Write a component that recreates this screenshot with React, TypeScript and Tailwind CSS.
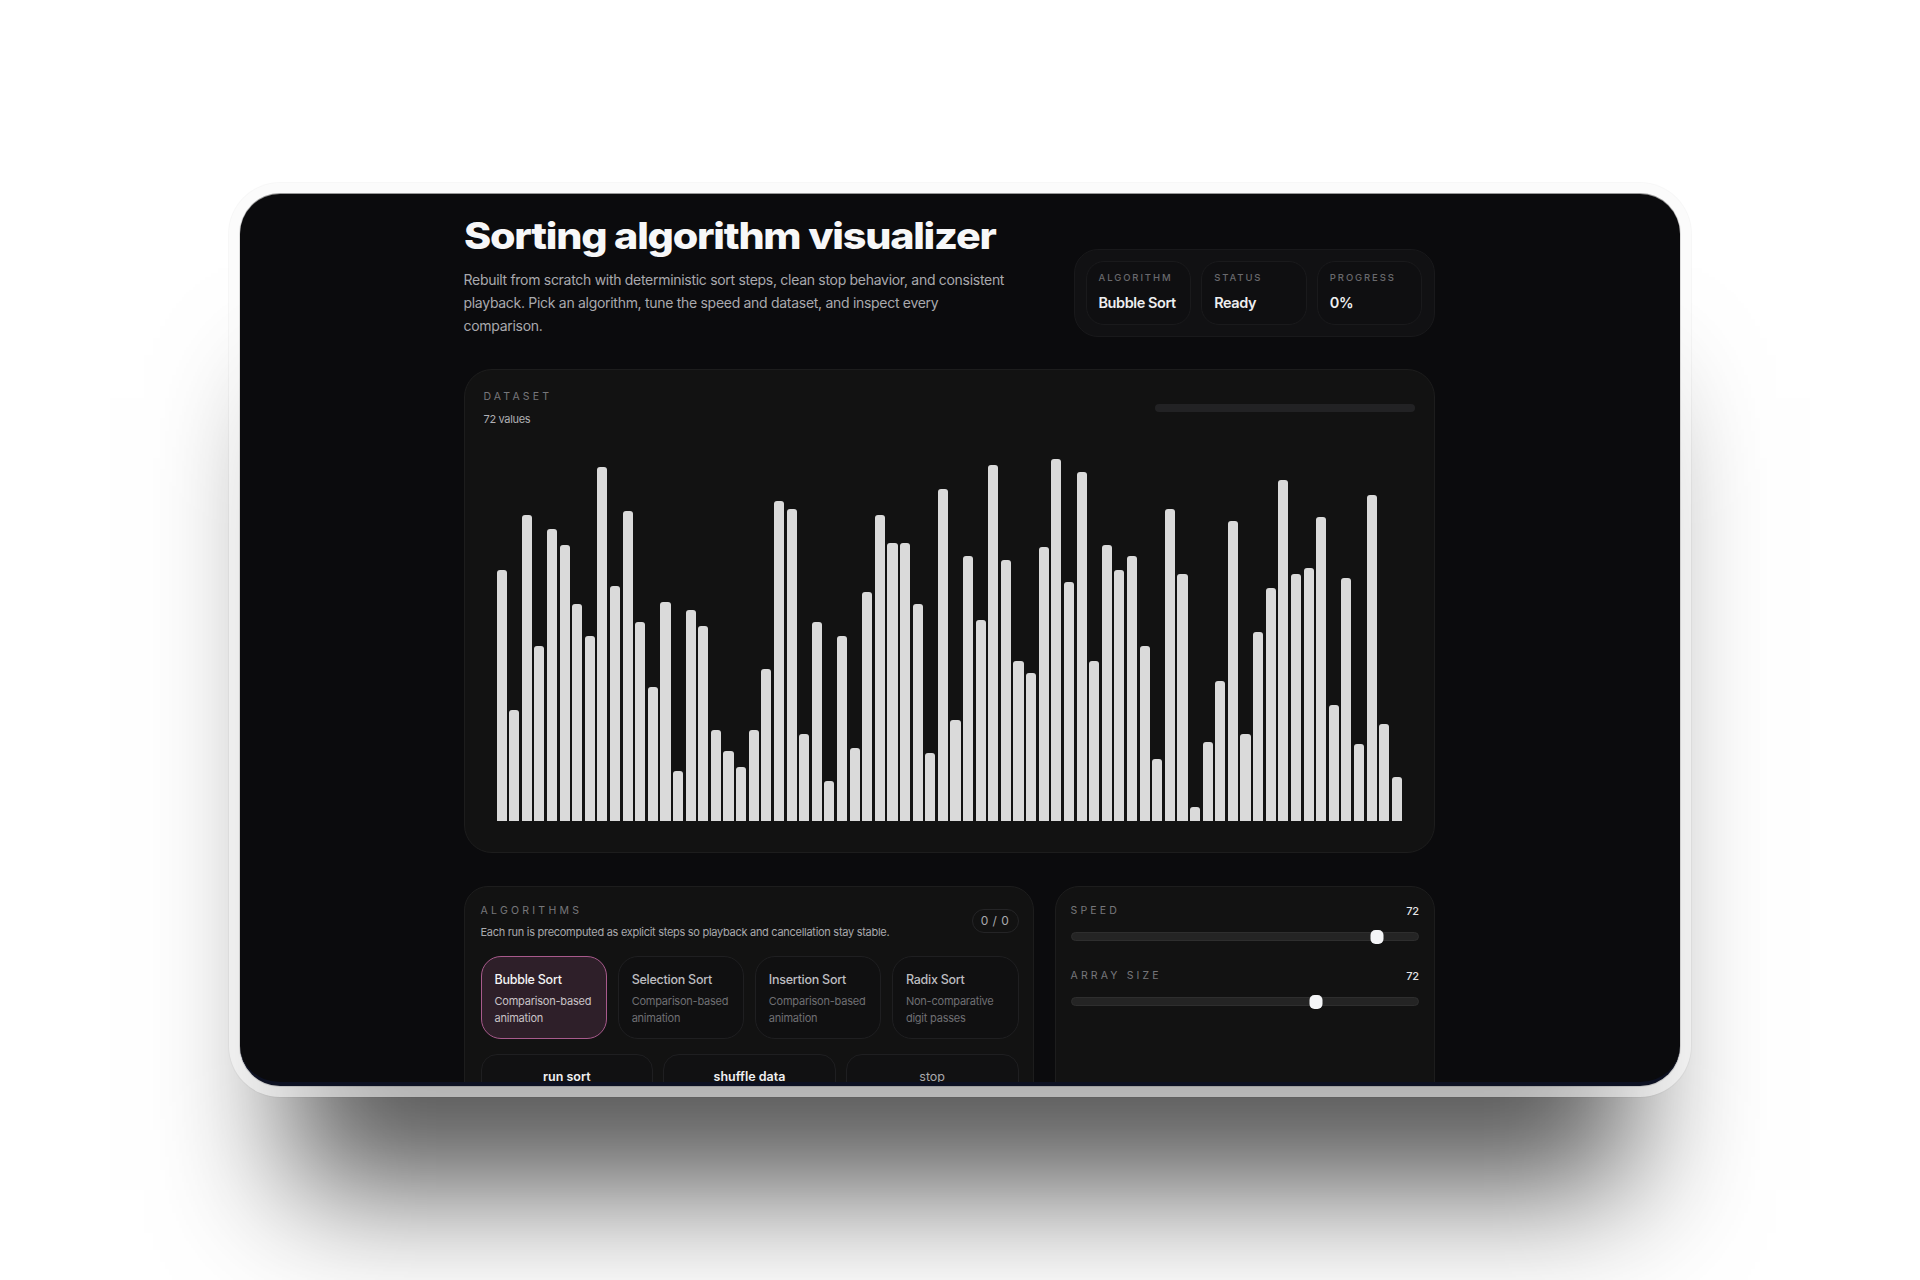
const barTops = [
  362, 783, 198, 592, 240, 289, 465, 562, 55, 410, 186, 520, 714, 459, 965, 483, 532, 844,
  905, 953, 844, 659, 155, 180, 856, 520, 995, 562, 898, 429, 198, 283, 283, 465, 911, 119,
  813, 320, 514, 48, 332, 635, 671, 295, 31, 398, 68, 635, 289, 362, 320, 592, 929, 180,
  374, 1074, 880, 695, 216, 856, 550, 417, 92, 374, 356, 204, 769, 386, 886, 138, 826, 984,
];
const bars = barTops.map((t) => (1116 - t) / 3);

const stats = [
  { label: "ALGORITHM", value: "Bubble Sort" },
  { label: "STATUS", value: "Ready" },
  { label: "PROGRESS", value: "0%" },
];

const algorithms = [
  { name: "Bubble Sort", desc: "Comparison-based animation", active: true },
  { name: "Selection Sort", desc: "Comparison-based animation" },
  { name: "Insertion Sort", desc: "Comparison-based animation" },
  { name: "Radix Sort", desc: "Non-comparative digit passes" },
];

function Slider({ label, left }: { label: string; left: string }) {
  return (
    <div>
      <div className="flex items-center justify-between h-[16px]">
        <span className="text-[10.5px] tracking-[0.3em] text-[#77777b]">{label}</span>
        <span className="text-[11px] font-medium tracking-[-0.04em] text-[#e4e4e6]">72</span>
      </div>
      <div className="relative mt-[13px] h-[9px] rounded-full bg-[#242424] border border-[#2e2e2e]">
        <div className={`absolute ${left} -top-[3px] -translate-x-1/2 w-[13px] h-[14px] rounded-[5px] bg-[#f4f5f7]`} />
      </div>
    </div>
  );
}

export default function App() {
  return (
    <div className="h-[1280px] bg-white overflow-hidden flex justify-center items-start pt-[194px] font-['Inter',sans-serif]">
      <div className="w-[1440px] h-[892px] rounded-[40px] bg-[#0b0b0d] border-b-[4px] border-[#0d1122] overflow-hidden pl-[223.5px] shadow-[0_-1px_0_rgba(0,0,0,0.3),0_0_0_1px_rgba(0,0,0,0.12),0_0_0_11px_rgba(255,255,255,0.55),0_0_0_12px_rgba(0,0,0,0.03),0_154px_120px_-50px_rgba(0,0,0,0.65)]">
        <div className="w-[971px]">
          <div className="flex justify-between items-end pt-[19px]">
            <div>
              <h1 className="inline-block origin-left scale-x-[1.115] whitespace-nowrap text-[37px] leading-[46px] font-extrabold tracking-[-0.03em] text-[#f7f7f8]">Sorting algorithm visualizer</h1>
              <p className="mt-[9px] w-[550px] text-[14px] leading-[23px] tracking-[-0.021em] text-[#a9a9ad]">
                Rebuilt from scratch with deterministic sort steps, clean stop behavior, and consistent playback. Pick an algorithm, tune the speed and dataset, and inspect every comparison.
              </p>
            </div>
            <div className="w-[361px] grid grid-cols-3 gap-[10px] p-[11px] rounded-[24px] bg-[#111113] border border-[#19191b]">
              {stats.map((s) => (
                <div key={s.label} className="h-[64px] rounded-[18px] px-[12px] pt-[9px] bg-[#0f0f11] border border-[#1a1a1c]">
                  <div className="text-[9.5px] font-medium tracking-[0.2em] text-[#69696d]">{s.label}</div>
                  <div className="mt-[7px] whitespace-nowrap text-[14.5px] font-semibold tracking-[-0.03em] text-[#eeeef0]">{s.value}</div>
                </div>
              ))}
            </div>
          </div>

          <div className="mt-[32px] h-[484px] rounded-[28px] bg-[#121212] border border-[#1d1d1d] px-[19px] flex flex-col">
            <div className="flex justify-between pt-[20px]">
              <div>
                <div className="text-[10.5px] leading-[14px] tracking-[0.3em] text-[#77777b]">DATASET</div>
                <div className="mt-[8px] text-[11px] leading-[14px] tracking-[-0.03em] text-[#b0b0b4]">72 values</div>
              </div>
              <div className="mt-[14px] w-[260px] h-[8px] rounded-full bg-[#222224]" />
            </div>
            <div className="mt-auto mb-[31px] mx-[13px] flex items-end gap-[2.5px]">
              {bars.map((h, i) => (
                <div key={i} className="flex-1 rounded-t-[3px] bg-[#dadada]" style={{ height: h }} />
              ))}
            </div>
          </div>

          <div className="mt-[33px] grid grid-cols-[570px_380px] gap-[21px]">
            <div className="h-[260px] rounded-[24px] bg-[#121212] border border-[#1d1d1d] pl-[16px] pr-[14px] pt-[17px]">
              <div className="flex justify-between">
                <div>
                  <div className="text-[10.5px] leading-[14px] tracking-[0.31em] text-[#77777b]">ALGORITHMS</div>
                  <div className="mt-[6px] text-[11px] leading-[16px] tracking-[-0.026em] text-[#a9a9ad]">Each run is precomputed as explicit steps so playback and cancellation stay stable.</div>
                </div>
                <div className="mt-[5px] w-[47px] h-[24px] rounded-full border border-[#242426] flex items-center justify-center text-[12px] tracking-[0.04em] text-[#a9a9ad]">0 / 0</div>
              </div>
              <div className="mt-[16px] grid grid-cols-4 gap-[10.5px]">
                {algorithms.map((a) => (
                  <div
                    key={a.name}
                    className={
                      a.active
                        ? "h-[83px] rounded-[20px] px-[13px] pt-[15px] bg-[#2e1f29] border-[1.5px] border-[#a85a8c]"
                        : "h-[83px] rounded-[20px] px-[13px] pt-[15px] bg-[#101011] border border-[#1f1f21]"
                    }
                  >
                    <div className={a.active ? "text-[12.5px] leading-[16px] font-medium tracking-[-0.02em] text-[#f4f4f5]" : "text-[12.5px] leading-[16px] font-medium tracking-[-0.02em] text-[#bdbdc0]"}>{a.name}</div>
                    <div className={a.active ? "mt-[5px] text-[11px] leading-[16.5px] tracking-[-0.02em] text-[#c9c3c7]" : "mt-[5px] text-[11px] leading-[16.5px] tracking-[-0.02em] text-[#6f6f73]"}>{a.desc}</div>
                  </div>
                ))}
              </div>
              <div className="mt-[15px] grid grid-cols-3 gap-[10px]">
                <button className="h-[46px] rounded-[16px] bg-[#111112] border border-[#1f1f21] text-[12.5px] font-semibold text-[#f0f0f2]">run sort</button>
                <button className="h-[46px] rounded-[16px] bg-[#111112] border border-[#1f1f21] text-[12.5px] font-semibold text-[#f0f0f2]">shuffle data</button>
                <button className="h-[46px] rounded-[16px] bg-[#111112] border border-[#1f1f21] text-[12.5px] text-[#a9a9ad]">stop</button>
              </div>
            </div>
            <div className="h-[260px] rounded-[24px] bg-[#121212] border border-[#1d1d1d] px-[15px] pt-[16px] flex flex-col gap-[27px]">
              <Slider label="SPEED" left="left-[88.4%]" />
              <Slider label="ARRAY SIZE" left="left-[70.8%]" />
            </div>
          </div>
        </div>
      </div>
    </div>
  );
}
